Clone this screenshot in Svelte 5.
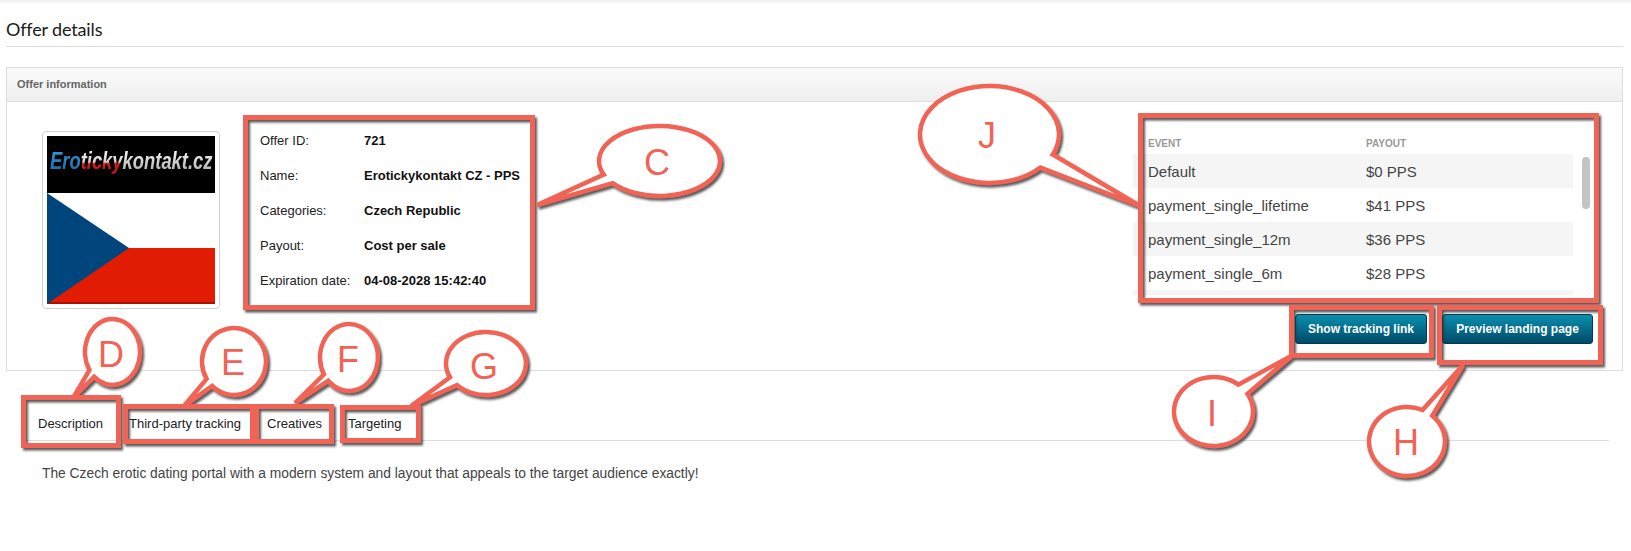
<script>
const offerInfo = [
    ["Offer ID:", "721"],
    ["Name:", "Erotickykontakt CZ - PPS"],
    ["Categories:", "Czech Republic"],
    ["Payout:", "Cost per sale"],
    ["Expiration date:", "04-08-2028 15:42:40"]
];

const events = [
    ["Default", "$0 PPS"],
    ["payment_single_lifetime", "$41 PPS"],
    ["payment_single_12m", "$36 PPS"],
    ["payment_single_6m", "$28 PPS"],
    ["", ""]
];

const tabs = ["Description", "Third-party tracking", "Creatives", "Targeting"];

// annotation boxes, outer edges as x0 y0 x1 y1
const boxes = [
    [243, 115, 535, 310],
    [1138, 113, 1599, 303],
    [1289, 305, 1434, 358],
    [1437, 305, 1603, 365],
    [21, 395, 121, 448],
    [123, 404, 255, 444],
    [254, 404, 334, 444],
    [340, 405, 421, 443]
];

const bubbles = [
    { l: "C", x0: 599, y0: 126, x1: 720, y1: 196, a: [602, 175], b: [613, 183], tip: [537, 205], tx: 657, ty: 162 },
    { l: "J", x0: 920, y0: 86, x1: 1059, y1: 183, a: [1051, 154], b: [1038, 166], tip: [1140, 206], tx: 987, ty: 135 },
    { l: "I", x0: 1174, y0: 377, x1: 1253, y1: 446, a: [1238, 385], b: [1247, 394], tip: [1293, 355], tx: 1212, ty: 413 },
    { l: "H", x0: 1369, y0: 407, x1: 1445, y1: 476, a: [1423, 409], b: [1432, 416], tip: [1463, 365], tx: 1406, ty: 442 },
    { l: "D", x0: 85, y0: 319, x1: 140, y1: 385, a: [87, 372], b: [94, 377], tip: [73, 398], tx: 111, ty: 354 },
    { l: "E", x0: 202, y0: 328, x1: 266, y1: 395, a: [208, 378], b: [213, 385], tip: [184, 406], tx: 233, ty: 362 },
    { l: "F", x0: 320, y0: 324, x1: 378, y1: 391, a: [323, 375], b: [328, 381], tip: [295, 403], tx: 348, ty: 359 },
    { l: "G", x0: 446, y0: 332, x1: 526, y1: 395, a: [448, 378], b: [457, 385], tip: [411, 406], tx: 484, ty: 366 }
];

function bubblePath(s) {
    const cx = (s.x0 + s.x1) / 2, cy = (s.y0 + s.y1) / 2;
    const rx = (s.x1 - s.x0) / 2, ry = (s.y1 - s.y0) / 2;
    // snap the tail's base points on to the ellipse
    const ta = Math.atan2((s.a[1] - cy) / ry, (s.a[0] - cx) / rx);
    const tb = Math.atan2((s.b[1] - cy) / ry, (s.b[0] - cx) / rx);
    const ax = cx + rx * Math.cos(ta), ay = cy + ry * Math.sin(ta);
    const bx = cx + rx * Math.cos(tb), by = cy + ry * Math.sin(tb);
    const delta = (tb - ta + Math.PI * 2) % (Math.PI * 2);
    const sweep = delta < Math.PI ? 0 : 1;
    return `M${ax} ${ay}A${rx} ${ry} 0 1 ${sweep} ${bx} ${by}L${s.tip[0]} ${s.tip[1]}Z`;
}
</script>

<div class="page">
    <h1 class="title">Offer details</h1>

    <section class="panel">
        <header class="panel-head">Offer information</header>
        <div class="panel-body">
            <div class="logo-card">
                <svg width="168" height="168" viewBox="0 0 168 168">
                    <defs>
                        <linearGradient id="ero" x1="0" y1="0" x2="0" y2="1">
                            <stop offset="0" stop-color="#3a9ad8" />
                            <stop offset="1" stop-color="#0f6aa8" />
                        </linearGradient>
                        <linearGradient id="ticky" x1="0" y1="0" x2="0" y2="1">
                            <stop offset="0.25" stop-color="#eeeeee" />
                            <stop offset="0.55" stop-color="#d8c8c8" />
                            <stop offset="0.62" stop-color="#d8201c" />
                            <stop offset="1" stop-color="#c01010" />
                        </linearGradient>
                        <linearGradient id="kontakt" x1="0" y1="0" x2="0" y2="1">
                            <stop offset="0" stop-color="#ffffff" />
                            <stop offset="1" stop-color="#aaaaaa" />
                        </linearGradient>
                        <filter id="soft"><feGaussianBlur stdDeviation="0.5" /></filter>
                    </defs>
                    <rect width="168" height="57" fill="#000" />
                    <rect y="57" width="168" height="55" fill="#fff" />
                    <rect y="112" width="168" height="56" fill="#e21c02" />
                    <rect y="166" width="168" height="2" fill="#a81002" />
                    <path d="M0 57L82 112L0 168Z" fill="#00457c" />
                    <g filter="url(#soft)" class="logo-text">
                        <text transform="translate(3 33) scale(0.8 1)"><tspan fill="url(#ero)">Ero</tspan><tspan fill="url(#ticky)">ticky</tspan><tspan fill="url(#kontakt)">kontakt.cz</tspan></text>
                    </g>
                </svg>
            </div>

            <div class="info">
                {#each offerInfo as row}
                    <div class="info-label">{row[0]}</div>
                    <div class="info-value">{row[1]}</div>
                {/each}
            </div>

            <div class="right">
                <div class="events-head">
                    <span class="col-event">EVENT</span>
                    <span>PAYOUT</span>
                </div>
                <div class="events">
                    {#each events as ev}
                        <div class="event-row">
                            <span class="col-event">{ev[0]}</span>
                            <span>{ev[1]}</span>
                        </div>
                    {/each}
                    <div class="scroll-thumb"></div>
                </div>
                <div class="buttons">
                    <button class="btn">Show tracking link</button>
                    <button class="btn">Preview landing page</button>
                </div>
            </div>
        </div>
    </section>

    <nav class="tabs">
        {#each tabs as tab}
            <div class="tab">{tab}</div>
        {/each}
    </nav>

    <p class="description">The Czech erotic dating portal with a modern system and layout that appeals to the target audience exactly!</p>

    <!-- callouts drawn on top of the screenshot -->
    <svg class="marks" width="1631" height="551" viewBox="0 0 1631 551">
        <defs>
            <filter id="shade" x="-20%" y="-20%" width="140%" height="140%">
                <feDropShadow dx="2" dy="2.5" stdDeviation="1.2" flood-color="#333" flood-opacity="0.8" />
            </filter>
        </defs>
        <g filter="url(#shade)">
            {#each boxes as b}
                <rect x={b[0] + 2.5} y={b[1] + 2.5} width={b[2] - b[0] - 5} height={b[3] - b[1] - 5} fill="none" stroke="#f16354" stroke-width="5" />
            {/each}
            {#each bubbles as s}
                <path d={bubblePath(s)} fill="#fff" stroke="#f16354" stroke-width="4.5" stroke-linejoin="miter" />
            {/each}
        </g>
        {#each bubbles as s}
            <text class="mark-letter" x={s.tx} y={s.ty + 13} text-anchor="middle">{s.l}</text>
        {/each}
    </svg>
</div>

<style>
:global(body) {
    margin: 0;
    background: #fff;
}
.page {
    position: relative;
    width: 1631px;
    height: 551px;
    overflow: hidden;
    box-sizing: border-box;
    padding: 0 8px 0 6px;
    font-family: "Liberation Sans", Arial, sans-serif;
    background: linear-gradient(#ececec, #fff 4px);
}
.title {
    margin: 0;
    height: 47px;
    box-sizing: border-box;
    padding-top: 18px;
    font-family: Lato, sans-serif;
    font-size: 18px;
    font-weight: 400;
    line-height: 22px;
    letter-spacing: -0.15px;
    color: #1a1a1a;
    border-bottom: 1px solid #dddddd;
}
.panel {
    margin-top: 20px;
    height: 304px;
    box-sizing: border-box;
    border: 1px solid #dddddd;
}
.panel-head {
    height: 34px;
    box-sizing: border-box;
    padding-left: 10px;
    line-height: 32px;
    font-size: 11px;
    font-weight: bold;
    color: #666;
    background: linear-gradient(#fafafa, #efefef);
    border-bottom: 1px solid #dddddd;
}
.panel-body {
    display: flex;
    align-items: flex-start;
    padding: 0 24px 0 35px;
}
.logo-card {
    margin-top: 29px;
    padding: 4px;
    width: 168px;
    height: 168px;
    border: 1px solid #d0d0d0;
    border-radius: 4px;
    flex-shrink: 0;
}
.logo-card svg {
    display: block;
}
.logo-text {
    font-family: "Liberation Sans", sans-serif;
    font-size: 23px;
    font-weight: bold;
    font-style: italic;
}
.info {
    margin: 21px 0 0 40px;
    display: grid;
    grid-template-columns: 104px auto;
    grid-auto-rows: 35px;
    align-items: center;
    font-size: 13px;
    color: #222;
}
.info-value {
    font-weight: bold;
    color: #111;
}
.right {
    margin-left: auto;
    width: 465px;
}
.events-head {
    margin-top: 31px;
    height: 21px;
    display: flex;
    align-items: center;
    padding-left: 15px;
    font-size: 10px;
    font-weight: bold;
    color: #999;
}
.events {
    position: relative;
    height: 141px;
    overflow: hidden;
    padding-right: 25px;
}
.event-row {
    height: 34px;
    box-sizing: border-box;
    padding: 1px 0 0 15px;
    display: flex;
    align-items: center;
    font-size: 15px;
    color: #444;
}
.event-row:nth-child(odd) {
    background: #f5f5f5;
}
.col-event {
    width: 218px;
}
.scroll-thumb {
    position: absolute;
    top: 3px;
    right: 8px;
    width: 8px;
    height: 52px;
    border-radius: 4px;
    background: #c4c4c4;
}
.buttons {
    margin-top: 19px;
    display: flex;
    justify-content: flex-end;
    gap: 15px;
    padding-right: 5px;
}
.btn {
    height: 30px;
    box-sizing: border-box;
    padding: 0;
    width: 132px;
    border: 1px solid #03384f;
    border-radius: 3px;
    background: linear-gradient(#0a8fae, #014a68);
    color: #fff;
    font-family: "Liberation Sans", Arial, sans-serif;
    font-size: 12px;
    font-weight: bold;
}
.btn:last-child {
    width: 151px;
}
.tabs {
    margin: 0 14px 0 19px;
    height: 70px;
    box-sizing: border-box;
    padding-top: 44px;
    display: flex;
    border-bottom: 1px solid #dddddd;
}
.tab {
    padding: 0 13px;
    font-size: 13px;
    line-height: 18px;
    color: #222;
}
.description {
    margin: 24px 0 0 36px;
    font-size: 13.8px;
    line-height: 18px;
    color: #444;
}
.marks {
    position: absolute;
    top: 0;
    left: 0;
    pointer-events: none;
}
.mark-letter {
    font-family: "Liberation Sans", Arial, sans-serif;
    font-size: 36px;
    fill: #f16354;
}
</style>
